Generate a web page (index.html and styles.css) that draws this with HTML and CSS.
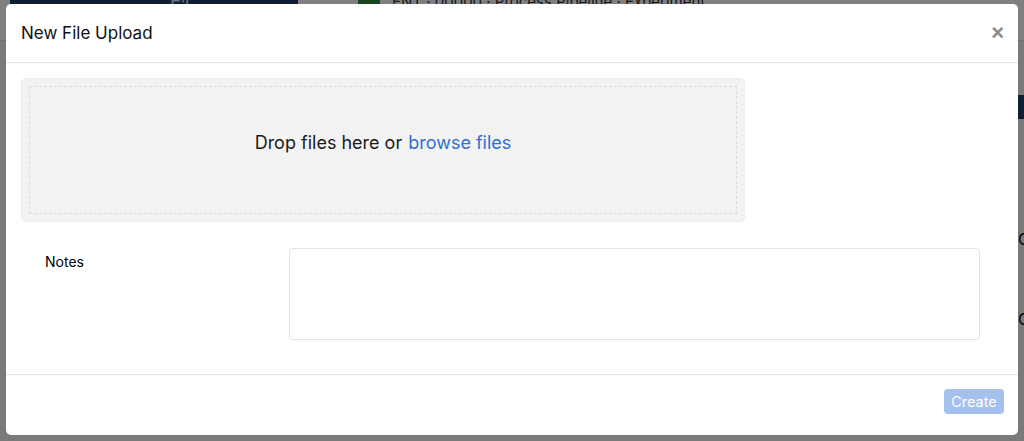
FILE: index.html
```html
<!DOCTYPE html>
<html lang="en">
<head>
    <meta charset="UTF-8">
    <meta name="viewport" content="width=device-width, initial-scale=1.0">
    <title>New File Upload</title>
    <link rel="stylesheet" href="styles.css">
</head>
<body>
    <!-- app behind the dialog, dimmed by the backdrop -->
    <div class="app">
        <div class="app-top">
            <div class="app-brand">Files</div>
            <div class="app-crumbs">
                <span class="crumb-badge"></span>
                <span>ENT · 00000 · Process Pipeline · Experiment</span>
            </div>
        </div>
        <div class="app-side">
            <div class="side-row dark"></div>
            <div class="side-row">C</div>
            <div class="side-row">C</div>
        </div>
    </div>
    <div class="backdrop"></div>

    <div class="modal">
        <div class="modal-header">
            <h4 class="modal-title">New File Upload</h4>
            <button class="close-btn">&times;</button>
        </div>
        <div class="modal-body">
            <div class="dropzone">
                <div class="dropzone-inner">
                    Drop files here or <a class="browse">browse files</a>
                </div>
            </div>
            <div class="form-row">
                <label class="form-label">Notes</label>
                <textarea class="form-input"></textarea>
            </div>
        </div>
        <div class="modal-footer">
            <button class="create-btn" disabled>Create</button>
        </div>
    </div>
</body>
</html>
```

FILE: styles.css
```css
body {
    margin: 0;
    font-family: Inter, "Noto Sans", Arial, sans-serif;
    background: #f5f5f5;
    height: 441px;
    overflow: hidden;
}
.app {
    height: 441px;
    overflow: hidden;
    position: relative;
}
.app-top {
    display: flex;
    height: 40px;
    background: #fff;
    border-bottom: 1px solid #ddd;
}
.app-brand {
    width: 288px;
    margin-left: 10px;
    background: #1f3c68;
    color: #dbe3ee;
    font-size: 18px;
    padding-left: 160px;
    box-sizing: border-box;
    line-height: 16px;
}
.app-crumbs {
    display: flex;
    gap: 12px;
    padding-left: 60px;
    font-size: 15px;
    color: #333;
    line-height: 4px;
}
.crumb-badge {
    width: 22px;
    height: 12px;
    background: #2e8b3a;
}
.app-side {
    position: absolute;
    right: 0;
    top: 95px;
    width: 6px;
}
.side-row {
    height: 30px;
    margin-bottom: 50px;
    font-size: 16px;
    color: #000;
}
.side-row.dark {
    background: #1f3c68;
    height: 24px;
    margin-bottom: 110px;
}
.backdrop {
    position: fixed;
    inset: 0;
    background: rgba(0, 0, 0, 0.5);
}
.modal {
    position: fixed;
    left: 6px;
    top: 4px;
    width: 1012px;
    height: 431px;
    background: #fff;
    border-radius: 5px;
    display: flex;
    flex-direction: column;
}
.modal-header {
    height: 58px;
    flex-shrink: 0;
    display: flex;
    align-items: center;
    justify-content: space-between;
    padding: 0 15px;
    border-bottom: 1px solid #e5e5e5;
}
.modal-title {
    margin: 0;
    font-size: 17px;
    font-weight: 400;
    color: #111;
}
.close-btn {
    border: none;
    background: none;
    padding: 0;
    font-size: 22px;
    font-weight: 700;
    color: #8a8a8a;
    line-height: 1;
    margin-right: -1px;
    font-family: Arial, sans-serif;
}
.modal-body {
    flex: 1;
    padding: 15px 15px 0;
}
.dropzone {
    width: 724px;
    height: 144px;
    box-sizing: border-box;
    background: #f3f3f3;
    border: 1px solid #ececec;
    border-radius: 5px;
    padding: 7px;
}
.dropzone-inner {
    height: 100%;
    box-sizing: border-box;
    border: 1px dashed #dcdcdc;
    display: flex;
    align-items: center;
    justify-content: center;
    font-size: 18px;
    color: #1a1a1a;
    padding-bottom: 16px;
}
.browse {
    color: #2f6fd4;
    margin-left: 6px;
}
.form-row {
    display: grid;
    grid-template-columns: 244px 1fr;
    margin: 26px 23px 0 24px;
}
.form-label {
    font-size: 14px;
    font-weight: 400;
    color: #000;
    padding-top: 5px;
}
.form-input {
    height: 92px;
    box-sizing: border-box;
    border: 1px solid #e2e2e8;
    border-radius: 4px;
    resize: none;
}
.modal-footer {
    height: 61px;
    flex-shrink: 0;
    box-sizing: border-box;
    border-top: 1px solid #e5e5e5;
    display: flex;
    align-items: flex-start;
    justify-content: flex-end;
    padding: 14px 14px 0;
}
.create-btn {
    height: 25px;
    width: 60px;
    padding: 0;
    border: none;
    border-radius: 4px;
    background: #a4c0ec;
    color: #fff;
    font-family: Inter, Arial, sans-serif;
    font-size: 14.5px;
}
```
